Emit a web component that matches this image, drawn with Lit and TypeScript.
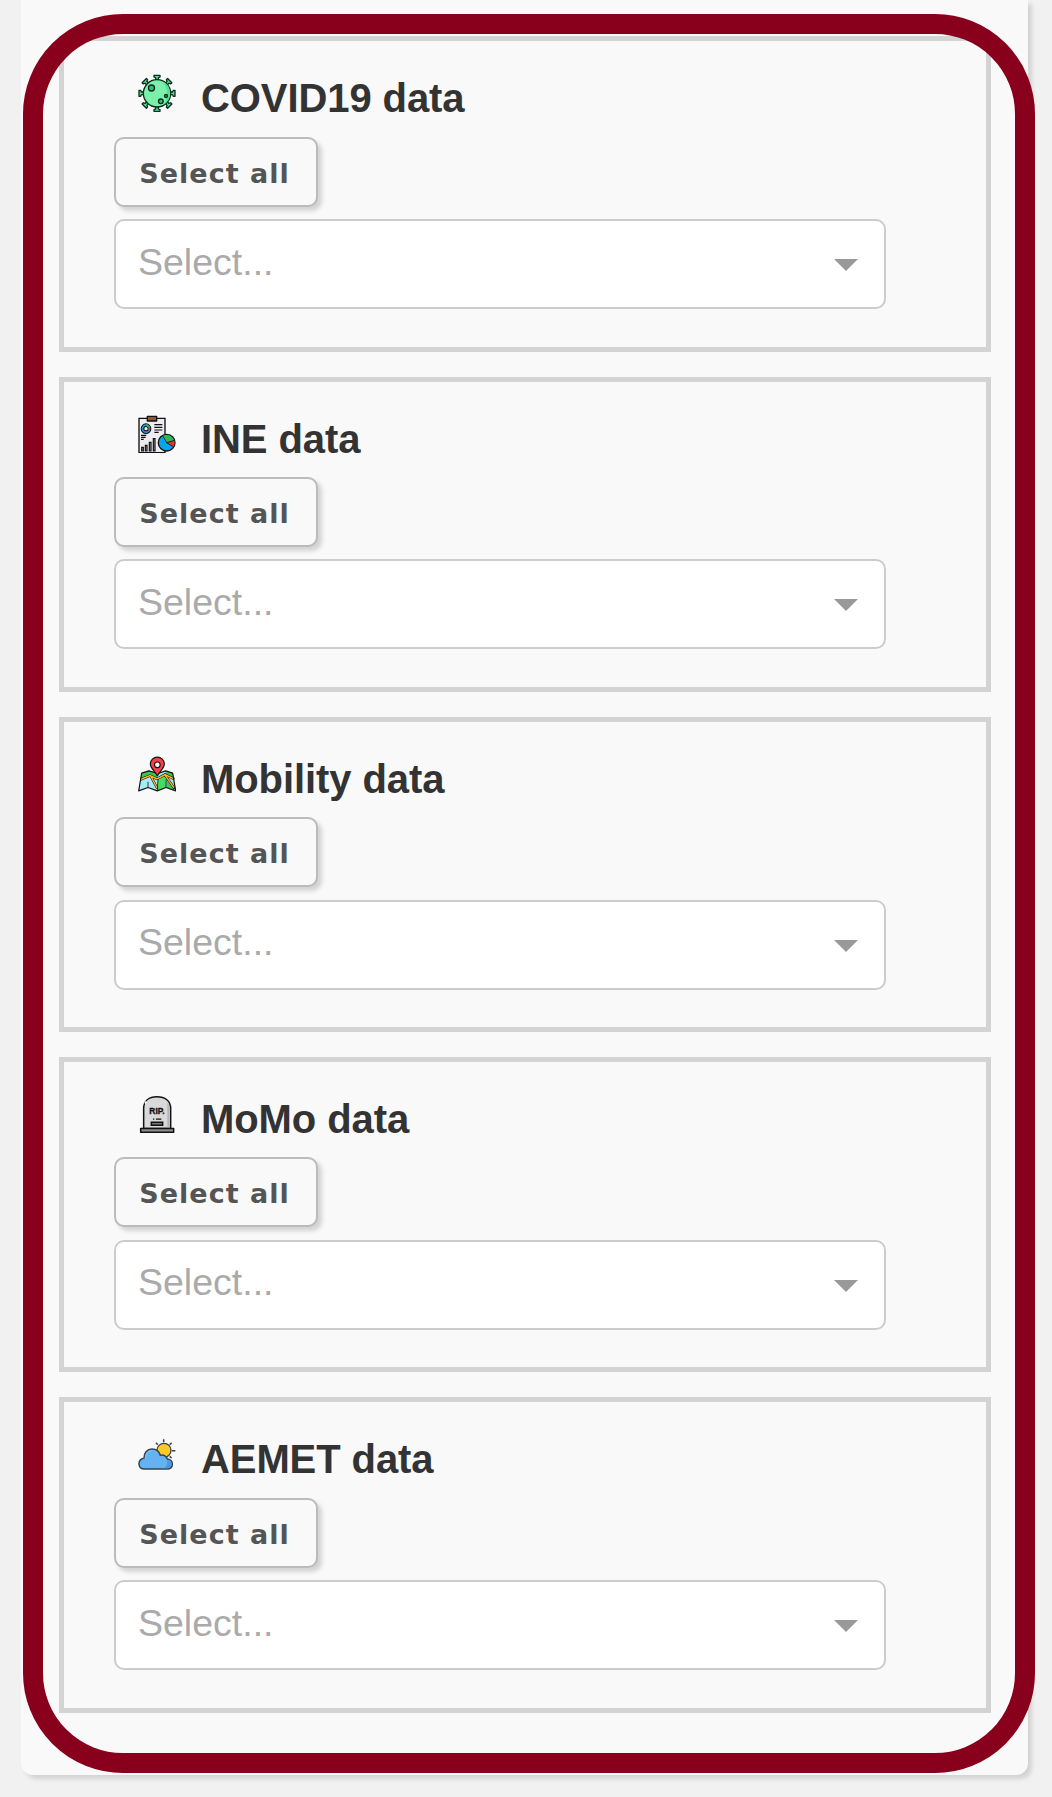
import { LitElement, html, svg, css } from "lit";
import { customElement, property } from "lit/decorators.js";

const knob = (a: number) => svg`
  <g transform="rotate(${a} 81 85)">
    <path d="M77 46V38L72 36V31H90V36L85 38V46Z" fill="#5fe398" stroke="#0b2c1c" stroke-width="4" stroke-linejoin="round"/>
  </g>`;

const icons: Record<string, unknown> = {
  virus: html`<svg class="icon" viewBox="24 27 114 114">
    ${[0, 45, 90, 135, 180, 225, 270, 315].map(knob)}
    <circle cx="81" cy="85" r="41" fill="#7bf0ab" stroke="#0b2c1c" stroke-width="4"/>
    <path d="M96 48a40 40 0 0 1 3 72c15-15 19-48-3-72z" fill="#52e392"/>
    <g fill="#3cb878" stroke="#0b2c1c" stroke-width="4">
      <circle cx="64.500" cy="69" r="9"/><circle cx="92.500" cy="109" r="7"/><circle cx="108" cy="93" r="4.500"/>
    </g>
  </svg>`,
  report: html`<svg class="icon" viewBox="24 28 114 114">
    <path d="M27 38H105V141H27Z" fill="#ececf1" stroke="#111" stroke-width="4"/>
    <path d="M52 32H80V46H52Z" fill="#8c5a35" stroke="#111" stroke-width="4" stroke-linejoin="round"/>
    <circle cx="48" cy="69" r="10.500" fill="#ececf1" stroke="#111" stroke-width="11"/>
    <circle cx="48" cy="69" r="10.500" fill="none" stroke="#199ade" stroke-width="5"/>
    <path d="M48 58.500a10.500 10.500 0 0 1 9 6" fill="none" stroke="#36b44a" stroke-width="5"/>
    <path d="M57 65a10.500 10.500 0 0 1 0 9" fill="none" stroke="#e3342f" stroke-width="5"/>
    <path d="M73 57H97M73 65H97M73 73H97M73 80H86M33 89H49M33 95H47M33 101H41" stroke="#111" stroke-width="3.500"/>
    <path d="M35 125H40V136H35ZM46 119H51V136H46ZM58 110H63V136H58ZM70 99H75V136H70Z" fill="#a5a5aa" stroke="#111" stroke-width="3.500"/>
    <circle cx="110" cy="111" r="25" fill="#08a4ef" stroke="#111" stroke-width="4"/>
    <path d="M110 111L98 91A24 24 0 0 1 132 103Z" fill="#35b84b"/>
    <path d="M110 111L133 104A24 24 0 0 1 130 123Z" fill="#f22c27"/>
    <path d="M98 90L110 111L134 104M110 111L131 124" fill="none" stroke="#111" stroke-width="2.500"/>
  </svg>`,
  map: html`<svg class="icon" viewBox="24 19.500 114 114">
    <path d="M35 74L57 67L84 75L107 67L128 74L137 127L108 117L82 127L54 117L26 127Z" fill="#a5ebf8"/>
    <path d="M35 74L57 67L58 82L31 92Z" fill="#39c653"/>
    <path d="M57 67L84 75L82 92L58 82Z" fill="#39c653"/>
    <path d="M84 92L105 80L108 117L83 126Z" fill="#43dd62"/>
    <path d="M107 67L128 74L131 91L107 80Z" fill="#39c653"/>
    <path d="M108 84L134 104L137 127L110 117Z" fill="#a5ebf8"/>
    <path d="M109 93L135 126L110 117Z" fill="#39c653"/>
    <path d="M31 93L60 81L81 91L105 78L133 92M63 84L82 120M105 80L134 121" fill="none" stroke="#111" stroke-width="7.500"/>
    <path d="M31 93L60 81L81 91L105 78L133 92M63 84L82 120M105 80L132 118" fill="none" stroke="#ffb52b" stroke-width="4.500"/>
    <path d="M54 100V117M108 92V117M84 92L82 127" stroke="#111" stroke-width="2.500"/>
    <path d="M35 74L57 67L84 75L107 67L128 74L137 127L108 117L82 127L54 117L26 127Z" fill="none" stroke="#111" stroke-width="3.500" stroke-linejoin="round"/>
    <path d="M82 83C79 71 61 62 61 46a21 20 0 0 1 42 0C103 62 85 71 82 83Z" fill="#f53f49" stroke="#111" stroke-width="3.500"/>
    <circle cx="82" cy="49" r="8.500" fill="#fff" stroke="#111" stroke-width="3.500"/>
  </svg>`,
  tomb: html`<svg class="icon" viewBox="24 20.500 114 114">
    <path d="M41 121V61C41 38 57 26 81 26S122 38 122 61V121Z" fill="#d9d9da" stroke="#111" stroke-width="4.500"/>
    <path d="M112 43C118 49 118 57 118 62V119H112Z" fill="#b5b5b7"/>
    <path d="M45 46L49 40" stroke="#f9f9f9" stroke-width="5"/>
    <path d="M32 121H131V132H32Z" fill="#8d8d90" stroke="#111" stroke-width="4.500" stroke-linejoin="round"/>
    <text class="rip" x="58" y="79" textLength="46" lengthAdjust="spacingAndGlyphs">RIP.</text>
    <path d="M69 93H73M78 93H94" stroke="#111" stroke-width="3.500"/>
    <path d="M64 102H98V111H64Z" fill="#77777a" stroke="#111" stroke-width="4.500"/>
  </svg>`,
  weather: html`<svg class="icon" viewBox="24 15 114 114">
    <path d="M101 28V37M78 38L83 44M125 38L119 44M136 62H126M125 84L119 79" stroke="#34434f" stroke-width="4.500"/>
    <circle cx="102" cy="61" r="21" fill="#ffc928" stroke="#34434f" stroke-width="4"/>
    <path d="M44 117C33 117 27 110 27 101C27 92 34 85 42 85C41 69 51 57 66 57C79 57 88 65 91 76C102 73 110 79 112 87C121 87 127 94 127 102C127 111 121 117 111 117Z" fill="#65b2f3" stroke="#34434f" stroke-width="4.500"/>
    <path d="M99 115H111C120 115 125 109 125 102C125 95 119 89 111 89C114 100 110 111 99 115Z" fill="#4f96e0"/>
    <path d="M46 87C46 71 55 62 66 62" fill="none" stroke="#7cc0f8" stroke-width="4"/>
  </svg>`,
};

@customElement("data-card")
export class DataCard extends LitElement {
  @property() label = "";
  @property() icon = "";

  static styles = css`
    :host {
      display: block;
      box-sizing: border-box;
      height: 315.25px;
      border: 5px solid #d3d3d3;
      padding-left: 50px;
      font-family: "Liberation Sans", Arial, sans-serif;
    }
    .head {
      display: flex;
      align-items: flex-start;
      gap: 25px;
      box-sizing: border-box;
      height: 95.300px;
      padding: 33px 0 0 24px;
    }
    .icon {
      display: block;
      flex: none;
      width: 38px;
      height: 38px;
    }
    .rip {
      font: bold 27px "Liberation Sans", Arial, sans-serif;
      fill: #111;
      stroke: #111;
      stroke-width: 1px;
    }
    .title {
      margin: 1px 0 0;
      font-size: 40px;
      line-height: 46px;
      letter-spacing: -0.090px;
      font-weight: bold;
      color: #333;
      white-space: nowrap;
    }
    .all {
      display: block;
      box-sizing: border-box;
      width: 204px;
      height: 70px;
      margin: 0;
      padding: 4px 3px 0 0;
      border: 2px solid #bbb;
      border-radius: 10px;
      background: #f9f9f9;
      box-shadow: 4px 4px 4px lightgrey;
      color: #555;
      font: bold 27px/62px "DejaVu Sans", Verdana, sans-serif;
      letter-spacing: 1px;
      text-align: center;
      white-space: nowrap;
    }
    .select {
      display: flex;
      justify-content: space-between;
      align-items: center;
      box-sizing: border-box;
      width: 772px;
      height: 90px;
      margin-top: 12.600px;
      padding: 0 26px 0 22px;
      border: 2px solid #ccc;
      border-radius: 10px;
      background: #fff;
      color: #aaa;
      font-size: 37.500px;
    }
    .placeholder {
      line-height: 82px;
      padding-bottom: 5.100px;
    }
    .arrow {
      border: 12px solid transparent;
      border-top-color: #999;
      border-bottom-width: 0;
      margin-top: 2px;
    }
  `;

  render() {
    return html`
      <div class="head">${icons[this.icon]}<h2 class="title">${this.label}</h2></div>
      <button class="all">Select all</button>
      <div class="select"><span class="placeholder">Select...</span><span class="arrow"></span></div>
    `;
  }
}

@customElement("app-root")
export class AppRoot extends LitElement {
  static styles = css`
    :host {
      display: block;
      box-sizing: border-box;
      height: 1797px;
      padding: 0 24px 0 21px;
      background: #f1f1f1;
      position: relative;
      overflow: hidden;
    }
    .panel {
      display: flex;
      flex-direction: column;
      gap: 25px;
      box-sizing: border-box;
      height: 1775px;
      padding: 36.300px 37px 0 38px;
      border-radius: 0 0 12px 12px;
      background: #f9f9f9;
      box-shadow: 4px 4px 4px lightgrey;
    }
    .ring {
      position: absolute;
      left: 23px;
      top: 14px;
      width: 1012px;
      height: 1759px;
      box-sizing: border-box;
      border: 20px solid #88001b;
      border-radius: 100px;
      pointer-events: none;
    }
  `;

  render() {
    return html`
      <div class="panel">
        <data-card label="COVID19 data" icon="virus"></data-card>
        <data-card label="INE data" icon="report"></data-card>
        <data-card label="Mobility data" icon="map"></data-card>
        <data-card label="MoMo data" icon="tomb"></data-card>
        <data-card label="AEMET data" icon="weather"></data-card>
      </div>
      <div class="ring"></div>
    `;
  }
}
